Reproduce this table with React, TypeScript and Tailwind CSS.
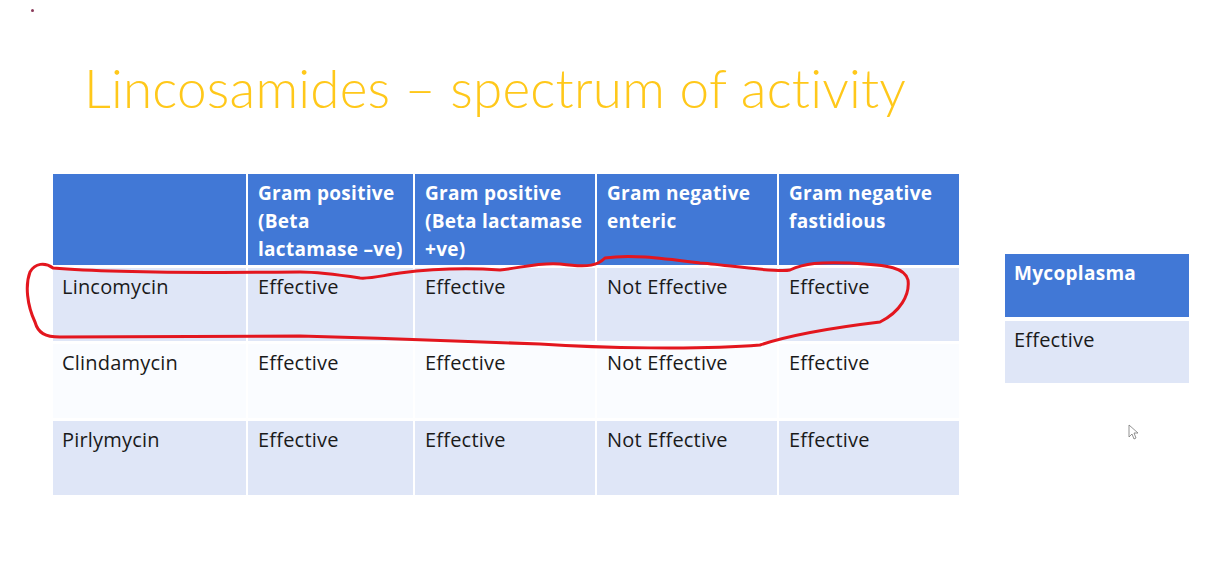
import React from "react";

const FONT = { fontFamily: "Lato, 'Open Sans', sans-serif" };
const TFONT = { fontFamily: "'Open Sans', Lato, sans-serif" };

const headers = [
  "",
  "Gram positive (Beta lactamase \u2013ve)",
  "Gram positive (Beta lactamase +ve)",
  "Gram negative enteric",
  "Gram negative fastidious",
];

const rows = [
  ["Lincomycin", "Effective", "Effective", "Not Effective", "Effective"],
  ["Clindamycin", "Effective", "Effective", "Not Effective", "Effective"],
  ["Pirlymycin", "Effective", "Effective", "Not Effective", "Effective"],
];

export default function App() {
  return (
    <div className="relative w-[1226px] h-[562px] bg-white overflow-hidden" style={FONT}>
      <div className="absolute left-[31px] top-[9px] w-[3px] h-[3px] rounded-full bg-[#8a3a5a]" />
      <div className="pl-[84px] pt-[56px] h-[174px]">
        <h1 className="text-[53px] leading-[64px] font-light text-[#ffc81a] tracking-[0.2px] whitespace-nowrap">
          Lincosamides – spectrum of activity
        </h1>
      </div>
      <div className="flex" style={TFONT}>
        <div className="ml-[53px] grid grid-cols-[193px_165px_180px_180px_180px] grid-rows-[91px_73px_74px_74px] gap-x-[2px] gap-y-[3px]">
          {headers.map((h, i) => (
            <div key={i} className="bg-[#4178d6] text-white font-bold text-[19px] leading-[28px] pl-[10px] pr-0 pt-[5px] tracking-[0.3px]">
              {h}
            </div>
          ))}
          {rows.map((r, ri) =>
            r.map((c, ci) => (
              <div
                key={ri + "-" + ci}
                className={
                  (ri === 1 ? "bg-[#fafcff] " : "bg-[#dfe6f7] ") +
                  "text-[#1a1a1a] text-[20px] leading-[28px] pt-[5px] tracking-[0.2px] " +
                  (ci === 0 ? "pl-[9px]" : "pl-[10px]")
                }
              >
                {c}
              </div>
            ))
          )}
        </div>
        <div className="ml-[46px] mt-[80px] flex flex-col gap-[4px] w-[184px]">
          <div className="h-[63px] bg-[#4178d6] text-white font-bold text-[19px] leading-[28px] pl-[9px] pt-[5px] tracking-[0.3px]">
            Mycoplasma
          </div>
          <div className="h-[62px] bg-[#dfe6f7] text-[#1a1a1a] text-[20px] leading-[28px] pl-[9px] pt-[5px] tracking-[0.2px]">
            Effective
          </div>
        </div>
      </div>
      <svg className="absolute inset-0 pointer-events-none" width="1226" height="562" viewBox="0 0 1226 562">
        <path
          d="M53,268 C45,262 35,263 30,272 C25,285 27,305 35,322 C38,333 45,337 60,337 L300,336 C380,338 450,341 540,344 C600,348 700,350 760,345 C790,335 830,328 880,322 C900,312 910,295 908,280 C905,268 890,265 850,263 C820,262 805,263 790,270 C775,273 720,264 700,263 C660,258 630,254 605,258 C598,265 590,268 560,264 C540,262 520,268 500,270 C470,268 440,268 400,273 C380,276 370,279 360,278 C340,275 320,272 300,272 C200,273 100,272 53,268"
          fill="none"
          stroke="#e3161e"
          strokeWidth="3"
          strokeLinecap="round"
          strokeLinejoin="round"
        />
        <path d="M1129,425 L1129,437 L1132,434 L1134,439 L1136,438 L1134,433 L1138,433 Z" fill="#fff" stroke="#777" strokeWidth="0.8" />
      </svg>
    </div>
  );
}
